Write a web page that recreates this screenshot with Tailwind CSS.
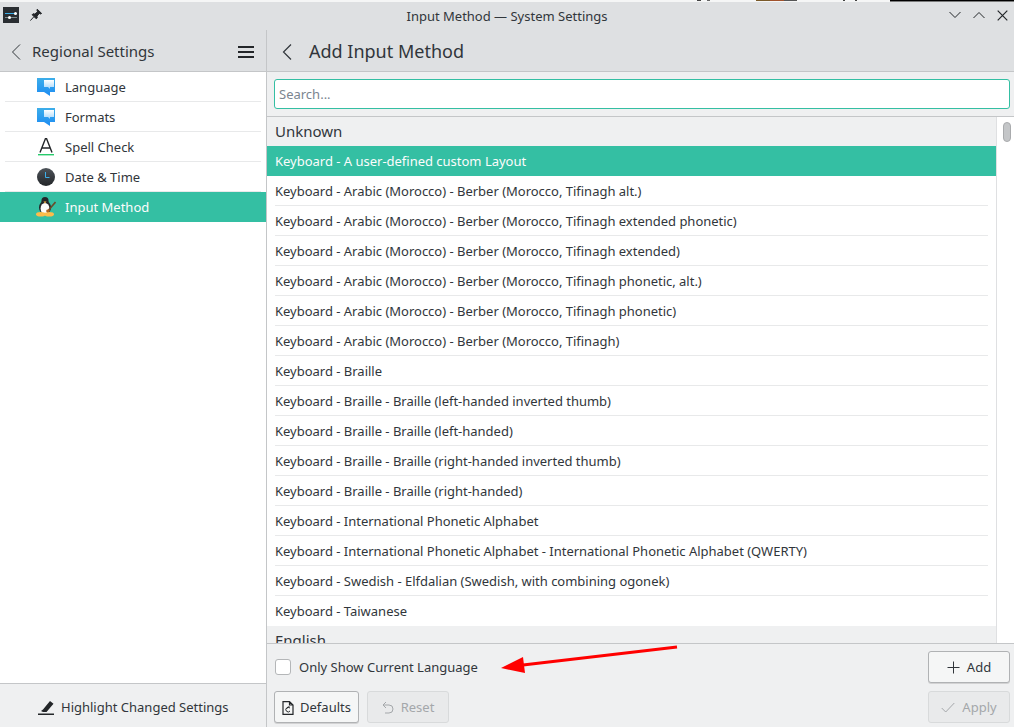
<!DOCTYPE html>
<html><head><meta charset="utf-8"><script src="https://cdn.jsdelivr.net/npm/@tailwindcss/browser@4"></script></head>
<body class="m-0 bg-white">
<div class="relative w-[1014px] h-[727px] overflow-hidden flex flex-col font-['Noto_Sans',sans-serif] text-[13px] text-[#31363b] bg-white">
  <!-- title bar -->
  <div class="h-[30px] shrink-0 flex items-center bg-[#dee0e2] border-t-2 border-[#f5f6f6] relative">
    <div class="-mt-[2px] ml-[3px] w-4 h-4 bg-[#2a2e32] flex flex-col justify-center gap-[3px] px-[2px]">
      <div class="h-px bg-[#3daee9] relative"><div class="absolute right-0 -top-[1px] w-[3px] h-[3px] rounded-full bg-white"></div></div>
      <div class="h-px bg-[#7f8c8d] relative"><div class="absolute left-[3px] -top-[1px] w-[3px] h-[3px] rounded-full bg-white"></div></div>
    </div>
    <svg class="-mt-[2px] ml-[10px]" width="14" height="14" viewBox="0 0 14 14"><path d="M8.2 1.2 L12.6 5.4 L11.6 6 L10.2 5.4 L8 8.2 L8.2 10 L7.2 10.8 L3.2 6.8 L4 5.8 L5.8 6 L8.6 3.8 L8 2.4 Z M4.8 8.8 L1.4 12.6" fill="#232629" stroke="#232629" stroke-width="1"/></svg>
    <div class="absolute left-0 right-0 text-center text-[13px] text-[#31363b] top-[4px] leading-[20px]">Input Method — System Settings</div>
    <div class="-mt-[2px] ml-auto flex items-center">
      <svg class="mr-[12px]" width="12" height="8" viewBox="0 0 12 8"><path d="M0.5 1 L6 6.5 L11.5 1" fill="none" stroke="#232629" stroke-width="1"/></svg>
      <svg class="mr-[12px]" width="12" height="8" viewBox="0 0 12 8"><path d="M0.5 7 L6 1.5 L11.5 7" fill="none" stroke="#232629" stroke-width="1"/></svg>
      <svg class="mr-[6px]" width="11" height="11" viewBox="0 0 11 11"><path d="M0.7 0.7 L10.3 10.3 M10.3 0.7 L0.7 10.3" fill="none" stroke="#232629" stroke-width="1.2"/></svg>
    </div>
  </div>
  <div class="flex-1 flex min-h-0">
    <!-- sidebar -->
    <div class="w-[267px] shrink-0 flex flex-col border-r border-[#c4c6c8]">
      <div class="h-[42px] shrink-0 flex items-center bg-[#dee0e2] border-b border-[#c4c6c8] pt-[2px]">
        <svg class="ml-[11px]" width="10" height="16" viewBox="0 0 10 16"><path d="M9 0.5 L1.5 8 L9 15.5" fill="none" stroke="#31363b" stroke-width="1"/></svg>
        <span class="ml-[11px] text-[15px]">Regional Settings</span>
        <div class="ml-auto mr-[12px] w-4 flex flex-col gap-[3px]"><div class="h-[2px] bg-[#232629]"></div><div class="h-[2px] bg-[#232629]"></div><div class="h-[2px] bg-[#232629]"></div></div>
      </div>
      <div class="flex-1 bg-white">
        <div class="h-[29px] pt-[3px] flex items-center pl-[37px]">
          <svg width="18" height="18" viewBox="0 0 18 18" class="mr-[10px] -mt-[2px]"><defs><linearGradient id="bub" x1="0" y1="0" x2="0" y2="1"><stop offset="0" stop-color="#ffffff"/><stop offset="1" stop-color="#a8d8fa"/></linearGradient><linearGradient id="box" x1="0" y1="0" x2="0" y2="1"><stop offset="0" stop-color="#3daee9"/><stop offset="1" stop-color="#1d8cf3"/></linearGradient></defs><path d="M0 0 H18 V14 H13 V18 L7 14 H0 Z" fill="url(#box)"/><path d="M7 2 H17 V9 H13 V11 L11 9 H7 Z" fill="url(#bub)"/></svg><span>Language</span>
        </div>
        <div class="h-px mx-[5px] bg-[#e8e9ea]"></div>
        <div class="h-[29px] pt-[2px] flex items-center pl-[37px]">
          <svg width="18" height="18" viewBox="0 0 18 18" class="mr-[10px] -mt-[1px]"><path d="M0 0 H18 V14 H13 V18 L7 14 H0 Z" fill="url(#box)"/><path d="M7 2 H17 V9 H13 V11 L11 9 H7 Z" fill="url(#bub)"/></svg><span>Formats</span>
        </div>
        <div class="h-px mx-[5px] bg-[#e8e9ea]"></div>
        <div class="h-[29px] pt-[2px] flex items-center pl-[37px]">
          <svg width="18" height="18" viewBox="0 0 18 18" class="mr-[10px] -mt-[1px]"><path d="M3 14.5 L8.5 0.5 L9.5 0.5 L15 14.5 M5 10 H13" fill="none" stroke="#232629" stroke-width="1.4"/><rect x="1" y="16" width="16" height="1.4" fill="#27ca6b"/></svg><span>Spell Check</span>
        </div>
        <div class="h-px mx-[5px] bg-[#e8e9ea]"></div>
        <div class="h-[29px] pt-[2px] flex items-center pl-[37px]">
          <svg width="18" height="18" viewBox="0 0 18 18" class="mr-[10px] -mt-[1px]"><defs><linearGradient id="clk" x1="0" y1="0" x2="0" y2="1"><stop offset="0" stop-color="#4d5359"/><stop offset="1" stop-color="#232629"/></linearGradient></defs><circle cx="9" cy="9" r="9" fill="url(#clk)"/><path d="M8.5 4 V9.5 H12.5" fill="none" stroke="#3daee9" stroke-width="1"/></svg><span>Date &amp; Time</span>
        </div>
        <div class="h-px mx-[5px] bg-[#e8e9ea]"></div>
        <div class="h-[30px] pt-[2px] flex items-center pl-[36px] bg-[#34bfa3] text-[#fcfcfc]">
          <svg width="20" height="20" viewBox="0 0 20 20" class="mr-[9px] -mt-[2px]"><ellipse cx="9" cy="4.2" rx="3.6" ry="4.2" fill="#232629"/><ellipse cx="9" cy="10.5" rx="6" ry="6.8" fill="#232629"/><ellipse cx="9" cy="11.5" rx="4.4" ry="5.5" fill="#fcfcfc"/><ellipse cx="4.8" cy="17.3" rx="4.8" ry="2.3" fill="#fdbc4b"/><ellipse cx="13.2" cy="17.3" rx="4.8" ry="2.3" fill="#fdbc4b"/><path d="M7.5 4.6 L9 6.4 L10.5 4.6 Z" fill="#fdbc4b"/><path d="M11 15 L19.5 5" stroke="#6b4a2a" stroke-width="1.6"/><ellipse cx="12" cy="13.8" rx="1.8" ry="1.4" fill="#b5651d"/></svg><span>Input Method</span>
        </div>
      </div>
      <div class="h-[44px] pt-[5px] shrink-0 bg-[#eff0f1] border-t border-[#c4c6c8] flex items-center">
        <svg class="ml-[38px] -mt-[2px]" width="16" height="16" viewBox="0 0 16 16"><path d="M5 10.5 L12 2 L15.5 4.8 L8.5 13 L5 13 L3 12 Z" fill="#232629"/><rect y="14.5" x="0" width="16" height="1.5" fill="#232629"/></svg>
        <span class="ml-[7px]">Highlight Changed Settings</span>
      </div>
    </div>
    <!-- main -->
    <div class="flex-1 flex flex-col min-w-0 bg-[#eff0f1]">
      <div class="h-[42px] pt-[2px] shrink-0 flex items-center bg-[#dee0e2] border-b border-[#c4c6c8]">
        <svg class="ml-[15px]" width="10" height="16" viewBox="0 0 10 16"><path d="M9 0.5 L1.5 8 L9 15.5" fill="none" stroke="#31363b" stroke-width="1.2"/></svg>
        <span class="ml-[17px] text-[18px]">Add Input Method</span>
      </div>
      <div class="h-[45px] shrink-0 px-[7px] pt-[7px] border-b border-[#c4c6c8]">
        <div class="h-[30px] w-[736px] pt-[2px] bg-white border border-[#34bfa3] rounded-[3px] flex items-center pl-[4px] text-[#7b8590]">Search...</div>
      </div>
      <div class="flex-1 flex min-h-0 bg-white">
        <div class="w-[729px] shrink-0 overflow-hidden tracking-[-0.012px]">
          <div class="h-[29px] bg-[#eff0f1] flex items-center pl-[8px] text-[15px]">Unknown</div>
          <div class="h-[30px] pt-[2px] bg-[#34bfa3] text-[#fcfcfc] flex items-center pl-[8px]">Keyboard - A user-defined custom Layout</div>
          <div class="h-[30px] pt-[2px] mx-[8px] flex items-center border-b border-[#e8e9ea]">Keyboard - Arabic (Morocco) - Berber (Morocco, Tifinagh alt.)</div>
          <div class="h-[30px] pt-[2px] mx-[8px] flex items-center border-b border-[#e8e9ea]">Keyboard - Arabic (Morocco) - Berber (Morocco, Tifinagh extended phonetic)</div>
          <div class="h-[30px] pt-[2px] mx-[8px] flex items-center border-b border-[#e8e9ea]">Keyboard - Arabic (Morocco) - Berber (Morocco, Tifinagh extended)</div>
          <div class="h-[30px] pt-[2px] mx-[8px] flex items-center border-b border-[#e8e9ea]">Keyboard - Arabic (Morocco) - Berber (Morocco, Tifinagh phonetic, alt.)</div>
          <div class="h-[30px] pt-[2px] mx-[8px] flex items-center border-b border-[#e8e9ea]">Keyboard - Arabic (Morocco) - Berber (Morocco, Tifinagh phonetic)</div>
          <div class="h-[30px] pt-[2px] mx-[8px] flex items-center border-b border-[#e8e9ea]">Keyboard - Arabic (Morocco) - Berber (Morocco, Tifinagh)</div>
          <div class="h-[30px] pt-[2px] mx-[8px] flex items-center border-b border-[#e8e9ea]">Keyboard - Braille</div>
          <div class="h-[30px] pt-[2px] mx-[8px] flex items-center border-b border-[#e8e9ea]">Keyboard - Braille - Braille (left-handed inverted thumb)</div>
          <div class="h-[30px] pt-[2px] mx-[8px] flex items-center border-b border-[#e8e9ea]">Keyboard - Braille - Braille (left-handed)</div>
          <div class="h-[30px] pt-[2px] mx-[8px] flex items-center border-b border-[#e8e9ea]">Keyboard - Braille - Braille (right-handed inverted thumb)</div>
          <div class="h-[30px] pt-[2px] mx-[8px] flex items-center border-b border-[#e8e9ea]">Keyboard - Braille - Braille (right-handed)</div>
          <div class="h-[30px] pt-[2px] mx-[8px] flex items-center border-b border-[#e8e9ea]">Keyboard - International Phonetic Alphabet</div>
          <div class="h-[30px] pt-[2px] mx-[8px] flex items-center border-b border-[#e8e9ea]">Keyboard - International Phonetic Alphabet - International Phonetic Alphabet (QWERTY)</div>
          <div class="h-[30px] pt-[2px] mx-[8px] flex items-center border-b border-[#e8e9ea]">Keyboard - Swedish - Elfdalian (Swedish, with combining ogonek)</div>
          <div class="h-[30px] pt-[2px] mx-[8px] flex items-center">Keyboard - Taiwanese</div>
          <div class="h-[29px] bg-[#eff0f1] flex items-center pl-[8px] text-[15px]">English</div>
        </div>
        <div class="flex-1 border-l border-[#dfe0e2] pl-[6px] pt-[5px]"><div class="w-[8px] h-[20px] rounded-full bg-[#c4c6c8] border border-[#a9abad]"></div></div>
      </div>
      <div class="h-[84px] shrink-0 bg-[#eff0f1] border-t border-[#c4c6c8] flex flex-col pl-[7px] pr-[4px] pt-[7px]">
        <div class="h-[32px] flex items-center">
          <div class="ml-[1px] w-4 h-4 bg-white border border-[#b4b6b8] rounded-[3px]"></div>
          <span class="ml-[8px] pt-[2px]">Only Show Current Language</span>
          <button class="ml-auto w-[82px] h-[32px] pt-[1px] bg-[#f5f6f6] border border-[#b0b2b4] rounded-[3px] shadow-[0_1px_0_rgba(0,0,0,0.12)] flex items-center justify-center gap-[7px]">
            <svg width="13" height="13" viewBox="0 0 13 13"><path d="M6.5 0.5 V12.5 M0.5 6.5 H12.5" fill="none" stroke="#31363b" stroke-width="1"/></svg><span>Add</span>
          </button>
        </div>
        <div class="h-[32px] mt-[8px] flex items-center">
          <button class="w-[85px] h-[32px] pt-[1px] bg-[#f5f6f6] border border-[#b0b2b4] rounded-[3px] shadow-[0_1px_0_rgba(0,0,0,0.12)] flex items-center justify-center gap-[6px]">
            <svg width="12" height="14" viewBox="0 0 12 14"><path d="M1 0.7 H7.5 L11 4 V13.3 H1 Z M7.5 0.7 V4 H11" fill="none" stroke="#232629" stroke-width="1.2"/><path d="M7.8 7 A2.3 2.3 0 1 0 8 10 M4.6 8 L5.8 6 L7.8 6" fill="none" stroke="#232629" stroke-width="1"/></svg><span>Defaults</span>
          </button>
          <button class="ml-[8px] w-[82px] h-[32px] pt-[1px] bg-[#e9eaeb] border border-[#d8dadb] rounded-[3px] flex items-center justify-center gap-[7px] text-[#a4a7aa]">
            <svg width="12" height="13" viewBox="0 0 12 13"><path d="M4 1 L1 4 L4 7 M1 4 H7 A4 4 0 0 1 7 12 H3" fill="none" stroke="#a4a7aa" stroke-width="1"/></svg><span>Reset</span>
          </button>
          <button class="ml-auto w-[82px] h-[32px] pt-[1px] bg-[#e9eaeb] border border-[#d8dadb] rounded-[3px] flex items-center justify-center gap-[7px] text-[#a4a7aa]">
            <svg width="14" height="11" viewBox="0 0 14 11"><path d="M0.7 6 L4.7 10 L13.3 1" fill="none" stroke="#a4a7aa" stroke-width="1"/></svg><span>Apply</span>
          </button>
        </div>
      </div>
    </div>
  </div>
  <!-- artefacts along the top edge and annotation arrow -->
  <svg class="absolute left-0 top-0 pointer-events-none" width="1014" height="727" viewBox="0 0 1014 727">
    <rect x="890" y="0" width="124" height="1.5" fill="#000"/>
    <rect x="697" y="0" width="4" height="1" fill="#444"/><rect x="707" y="0" width="3" height="1" fill="#666"/>
    <rect x="756" y="0" width="14" height="1" fill="#7a5a2a"/><rect x="770" y="0" width="14" height="1" fill="#a0522d"/><rect x="784" y="0" width="13" height="1" fill="#555"/>
    <rect x="843" y="0" width="2" height="1" fill="#444"/><rect x="855" y="0" width="2" height="1" fill="#444"/>
    <path d="M677 647 L523 665" stroke="#ff0000" stroke-width="3" fill="none"/><path d="M501 668 L523 657 L525 673 Z" fill="#ff0000"/>
  </svg>
</div>
</body></html>
